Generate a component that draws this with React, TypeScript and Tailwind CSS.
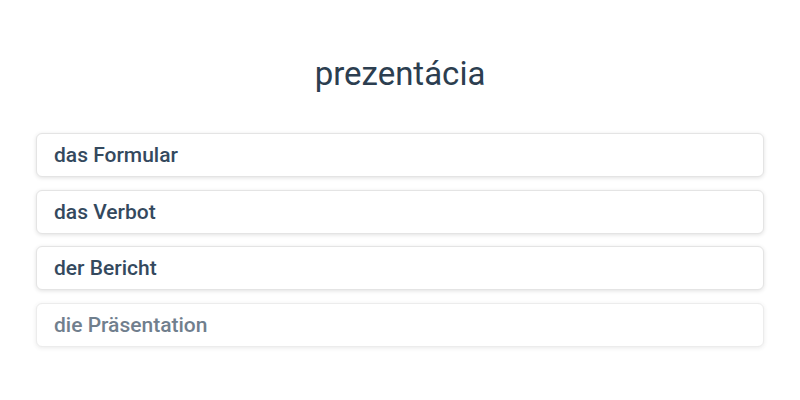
const options = ["das Formular", "das Verbot", "der Bericht", "die Präsentation"];

export default function App() {
  return (
    <div className="w-[800px] h-[400px] bg-white font-['Roboto',sans-serif] text-[#2c3e50] px-9 pt-[54px]">
      <h1 className="text-center text-[33px] leading-[40px] font-normal">prezentácia</h1>
      <div className="mt-[39px] flex flex-col gap-[12.6px]">
        {options.map((o, i) => (
          <div
            key={o}
            className={
              "h-[44px] flex items-center pl-[17px] pt-[2px] rounded-[6px] border border-[#e4e4e4] bg-white shadow-[0_1px_4px_rgba(0,0,0,0.12)] text-[21px] font-medium text-[#34495e] " +
              (i === 3 ? "opacity-70" : "")
            }
          >
            {o}
          </div>
        ))}
      </div>
    </div>
  );
}
